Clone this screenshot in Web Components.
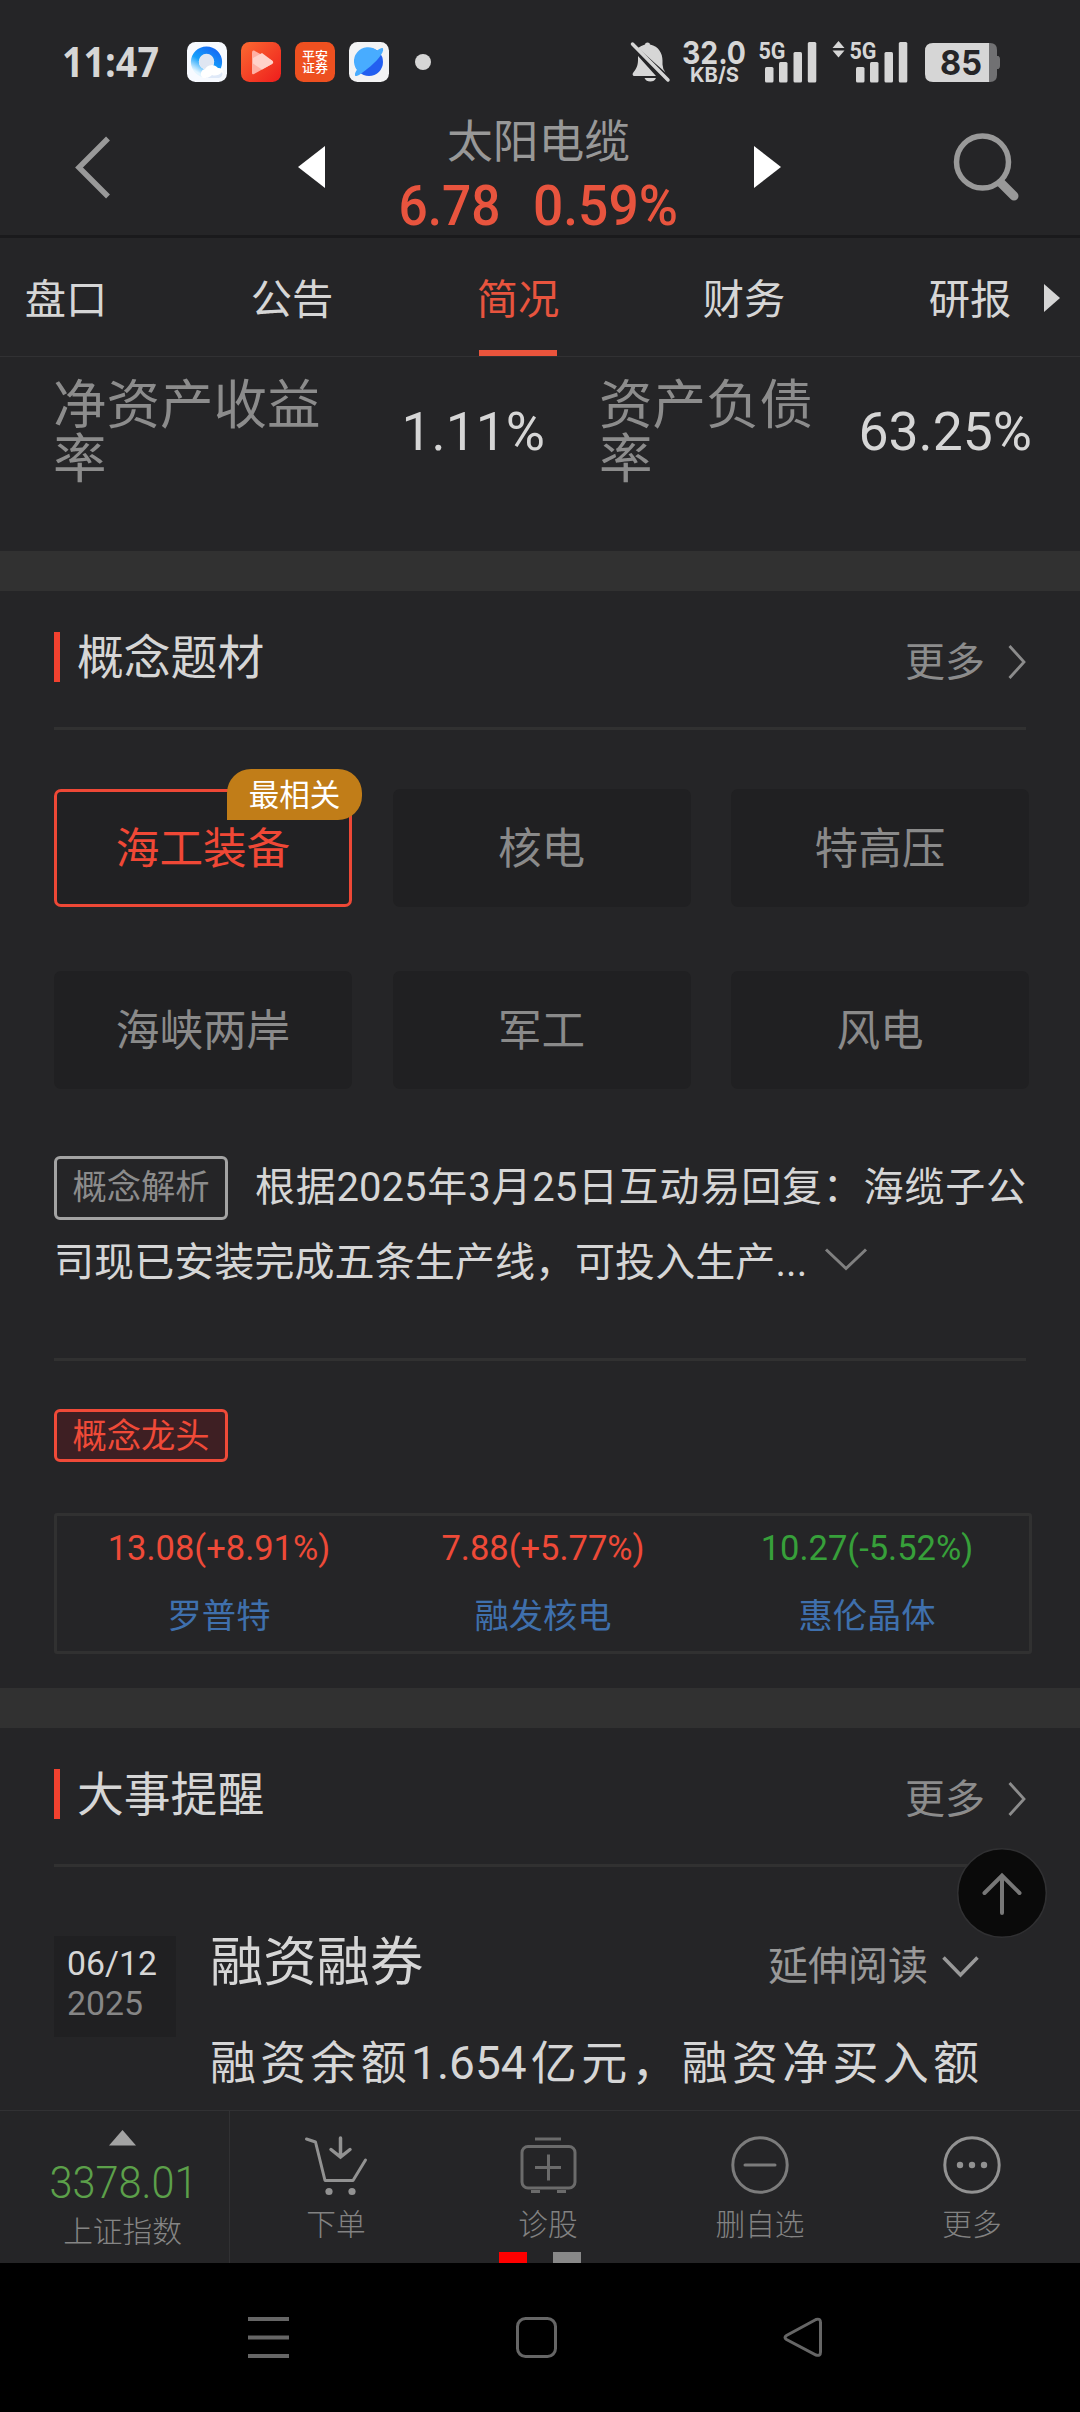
<!DOCTYPE html>
<html lang="zh-CN">
<head>
<meta charset="utf-8">
<title>太阳电缆</title>
<style>
html,body{margin:0;padding:0;background:#252527}
body{width:1080px;height:2412px;overflow:hidden;font-family:Roboto,"Noto Sans CJK SC",sans-serif;color:#d6d6d6}
</style>
</head>
<body>
<stock-app></stock-app>
<script>
const define = (name, css, html) => customElements.define(name, class extends HTMLElement {
  constructor() {
    super();
    const root = this.attachShadow({mode: 'open'});
    const body = typeof html === 'function' ? html(this) : html;
    root.innerHTML = `<style>*{box-sizing:border-box}svg{display:block;flex:none;overflow:visible}${css}</style>${body}`;
  }
});

define('status-bar', `
:host{display:flex;height:110px;padding:35px 80px 0 64px;align-items:flex-start;justify-content:space-between}
.l,.r{display:flex;height:54px;align-items:center}
.app{margin-left:14px}
`, `
<div class="l">
<svg width="96" height="54" fill="#d6d6d6"><text x="-2" y="42" font-family="Open Sans" font-weight="700" font-size="42" textLength="97" lengthAdjust="spacingAndGlyphs">11:47</text></svg>
<svg style="margin-left:27px" width="40" height="40" viewBox="0 0 40 40"><defs><linearGradient id="a" x1=".8" y1="0" x2=".2" y2="1"><stop offset="0" stop-color="#1670f5"/><stop offset=".55" stop-color="#14a0fb"/><stop offset="1" stop-color="#e3f5ff"/></linearGradient></defs><rect width="40" height="40" rx="8.5" fill="#f7faff"/><circle cx="19.500" cy="20" r="11.600" fill="none" stroke="url(#a)" stroke-width="8"/><circle cx="19.500" cy="19.500" r="7.700" fill="#dfe6f2"/><path d="M16 36a5 5 0 0 1 2-9 8 8 0 0 1 13-1 5 5 0 0 1 1 10z" fill="#fff"/><path d="M17 36h15a4 4 0 0 0 3-6c-3 4-8 4-10 3-3 3-6 3-8 3z" fill="#dfe9f8"/></svg>
<svg class="app" width="40" height="40" viewBox="0 0 40 40"><defs><linearGradient id="b" x1="0" y1="0" x2="1" y2="1"><stop offset="0" stop-color="#fb6a31"/><stop offset="1" stop-color="#ee1c1c"/></linearGradient></defs><rect width="40" height="40" rx="8.500" fill="url(#b)"/><path d="M13 8.500 Q11 8 11 10.500V31q0 2 2 1L31 22q2-2 0-3.500z" fill="#ffb0a4"/><path d="M12 16l9-5 10 7.500q2 1.500 0 3.500l-10 5.500-9-6z" fill="#ffd2ca"/></svg>
<svg class="app" width="40" height="40" viewBox="0 0 40 40"><rect width="40" height="40" rx="8.500" fill="#ee5020"/><g fill="#fff" font-family="Noto Sans CJK SC" font-weight="500" font-size="12.500"><text x="7" y="19" textLength="26" lengthAdjust="spacingAndGlyphs">平安</text><text x="7" y="31" textLength="26" lengthAdjust="spacingAndGlyphs">证券</text></g></svg>
<svg class="app" width="40" height="40" viewBox="0 0 40 40"><rect width="40" height="40" rx="8.500" fill="#f3f3f4"/><circle cx="20" cy="20" r="14" fill="#235ff0"/><path d="M10 30A14 14 0 0 1 28 8.500c3-2 5-3 6-2 1.500 4-7 14-16 20.500C12 32 7 35.500 6 33.500c-.5-2 1-5 2.500-6z" fill="#48acff"/></svg>
<svg style="margin-left:26px" width="16" height="16"><circle cx="8" cy="8" r="8" fill="#d6d6d6"/></svg>
</div>
<div class="r">
<svg width="370" height="54" viewBox="630 35 370 54" fill="#d6d6d6">
<path d="M638 48q3-2.500 7-3.500 0-2 2.500-2t2.500 2c9 2 12.500 9 12.500 16v4q0 4 3 8zM638 56v4c0 6-2 9-5 13-1 1.500 0 3 1 3h22zM644.500 78h11.500q-1.500 3.500-5.700 3.500t-5.800-3.500z"/>
<path d="M632.500 44l35.500 36" stroke="#d6d6d6" stroke-width="3.500" stroke-linecap="round"/>
<g font-family="Inter" font-weight="700">
<text x="682" y="63.500" font-size="31" textLength="64" lengthAdjust="spacingAndGlyphs">32.0</text>
<text x="690" y="81.500" font-size="20.500" textLength="49" lengthAdjust="spacingAndGlyphs">KB/S</text>
</g>
<g font-family="Roboto" font-weight="700" font-size="24.500"><text x="758.500" y="59" textLength="27" lengthAdjust="spacingAndGlyphs">5G</text><text x="849.500" y="59" textLength="27" lengthAdjust="spacingAndGlyphs">5G</text></g>
<g id="bars"><rect x="765" y="67" width="8.500" height="15.500" rx="1.500"/><rect x="779" y="62" width="8.500" height="20.500" rx="1.500"/><rect x="793.500" y="52" width="8.500" height="30.500" rx="1.500"/><rect x="807.800" y="42" width="8.500" height="40.500" rx="1.500"/></g>
<use href="#bars" x="91"/>
<path d="M838.500 41l6 7h-12zM832.500 50.500h12l-6 7z"/>
<path d="M989 43h1q7 0 7 7v6h1.500q1.500 1 1.500 3v7q0 2-1.500 3H997v6q0 7-7 7h-1z" fill="#717173"/>
<path d="M933 43h56v39h-56q-8 0-8-8V51q0-8 8-8z"/>
<text x="940" y="74.500" font-family="Inter" font-weight="700" font-size="34" fill="#252527" textLength="42" lengthAdjust="spacingAndGlyphs">85</text>
</svg>
</div>`);

define('title-bar', `
:host{display:flex;height:128px;padding:0 62px 0 76px;border-bottom:3px solid #1a1a1c;align-items:flex-start}
.name{font-size:45.800px;line-height:60px;color:#989898;text-align:center;width:279px;padding-top:1px;margin-right:3px}
.mid{margin:2px 0 0 74px;width:282px;display:flex;flex-direction:column;align-items:center}
`, `
<svg style="margin-top:26px" width="34" height="62" viewBox="0 0 34 62"><path d="M32 2.500L3 31.500 32 60.500" fill="none" stroke="#999" stroke-width="5.500"/></svg>
<svg style="margin:36px 0 0 188px" width="27" height="42"><path d="M27 0v42L0 21z" fill="#fff"/></svg>
<div class="mid"><div class="name">太阳电缆</div>
<svg width="282" height="56" viewBox="398 173 282 56" fill="#e8543e" font-family="Roboto" font-weight="500" font-size="56"><text x="397.500" y="224.500" textLength="102" lengthAdjust="spacingAndGlyphs">6.78</text><text x="532" y="224.500" textLength="145" lengthAdjust="spacingAndGlyphs">0.59%</text></svg></div>
<svg style="margin:36px 0 0 73px" width="27" height="42"><path d="M0 0v42l27-21z" fill="#fff"/></svg>
<svg style="margin:24px 0 0 173px" width="66" height="66" viewBox="953 134 66 66" fill="none" stroke="#999"><circle cx="981.500" cy="162" r="26" stroke-width="5.500"/><path d="M1000 183l13 13" stroke-width="9" stroke-linecap="round"/></svg>
`);

define('tab-item', `
:host{display:flex;flex-direction:column;width:82px;height:118px;align-items:center;font-size:41.300px;line-height:60px;padding-top:32px;white-space:nowrap}
i{width:78px;height:6px;margin-top:20px}
:host([active]){color:#e8543e}
:host([active]) i{background:#ea543c}
`, `<span><slot></slot></span><i></i>`);

define('tab-strip', `
:host{display:flex;height:119px;border-bottom:1px solid #313133;padding-left:25px;gap:144px}
svg{margin:46px 0 0 -111px}
`, `<tab-item>盘口</tab-item><tab-item>公告</tab-item><tab-item active>简况</tab-item><tab-item>财务</tab-item><tab-item>研报</tab-item><svg width="16" height="28"><path d="M0 0l16 14L0 28z" fill="#d6d6d6"/></svg>`);

define('key-stat', `
:host{display:flex;align-items:center;justify-content:space-between;height:108px;font-size:53.500px;line-height:54px}
.k{color:#8c8c8c;margin-left:-1px}
.v{margin-bottom:2px}
`, el => `<div class="k" style="width:${el.getAttribute('w')}px">${el.getAttribute('label')}</div><div class="v"><slot></slot></div>`);

define('section-head', `
:host{display:flex;height:139px;margin:0 54px;border-bottom:3px solid #313131;padding-top:41px;align-items:flex-start}
.row{display:flex;flex:1;height:50px;align-items:center}
i{width:6px;height:50px;background:#f2412f;margin-right:17px}
b{font-weight:400;font-size:46.800px;line-height:50px;flex:1;margin-top:1px}
span{font-size:40px;line-height:50px;color:#8c8c8c;margin:12px 23px 0 0}
svg{margin-top:10px}
`, `<div class="row"><i></i><b><slot></slot></b><span>更多</span><svg width="18" height="34"><path d="M1.500 1L16 17 1.500 33" fill="none" stroke="#8c8c8c" stroke-width="2.800"/></svg></div>`);

define('topic-chip', `
:host{display:flex;position:relative;height:118px;border-radius:7px;background:#202022;align-items:center;justify-content:center;font-size:43.600px;line-height:60px;color:#8a8a8a}
span{margin-top:3px}
:host([active]){color:#f04836;border:3px solid #ee4836;background:#212123}
.badge{position:absolute;right:-13px;top:-23px;width:135px;height:51px;border-radius:24px 24px 24px 0;background:#c17d18;color:#fff;font-size:30.500px;line-height:54px;text-align:center}
`, el => `<span><slot></slot></span>${el.hasAttribute('badge') ? `<div class="badge">${el.getAttribute('badge')}</div>` : ''}`);

define('label-tag', `
:host{display:flex;flex:none;width:174px;height:64px;border:3px solid #a3a3a3;border-radius:6px;color:#8c8c8c;align-items:center;justify-content:center;font-size:34.300px;line-height:50px;padding-bottom:2px}
:host([hot]){height:53px;border-color:#f04a38;background:#3e1f23;color:#f04a38;padding:0}
`, `<span><slot></slot></span>`);

define('leader-stock', `
:host{display:flex;flex:1;flex-direction:column;align-items:center;font-size:34.500px;line-height:64px;color:#ee4a38}
:host([down]){color:#37a03a}
div{color:#3f70ad;font-size:34.300px;line-height:73px}
`, el => `<span><slot></slot></span><div>${el.getAttribute('name')}</div>`);

define('event-row', `
:host{display:flex;margin:69px 0 0 54px}
.date{width:122px;height:101px;background:#202022;padding:8px 0 0 13px;font-size:33.800px;line-height:40px}
.date p{margin:0;color:#868686}
.body{width:769px;margin-left:34px}
.top{display:flex;height:54px;align-items:center;font-size:53.300px;line-height:54px}
.top b{font-weight:400;flex:1}
.top span{font-size:40px;color:#999;margin:8px 14px 0 0}
.top svg{margin-top:7px}
.txt{margin-top:43px;font-size:46px;line-height:60px;text-align:justify;text-align-last:justify;white-space:nowrap}
`, `<div class="date">06/12<p>2025</p></div><div class="body"><div class="top"><b>融资融券</b><span>延伸阅读</span><svg width="37" height="22"><path d="M1.500 1.500l17 17.500 17-17.500" fill="none" stroke="#999" stroke-width="3.500"/></svg></div><div class="txt"><slot></slot></div></div>`);

define('to-top', `
:host{display:block;position:absolute;left:957px;top:1848px}
`, `<svg width="90" height="90" viewBox="957 1848 90 90"><circle cx="1002" cy="1893" r="44.300" fill="#0a0a0a" stroke="#303032" stroke-width="1.500"/><path d="M1002 1913v-37M984.500 1893l17.500-17.500 17.500 17.500" fill="none" stroke="#777" stroke-width="4" stroke-linecap="round"/></svg>`);

define('action-item', `
:host{display:flex;flex:1;flex-direction:column;align-items:center;padding-top:24px;font-size:29.700px;line-height:40px;font-weight:300;color:#828282}
span{margin-top:10px}
`, el => `<svg width="62" height="60" viewBox="0 0 62 60" fill="none" stroke="${el.getAttribute('tone')}" stroke-width="3">${({
cart:'<path d="M1.500 4l9 3 9.500 38.500h28L60.500 25" stroke-linecap="round" stroke-linejoin="round"/><path d="M35.500 3v18M26 14.500l9.500 7.500 9.500-7.500" stroke-width="3.500" stroke-linecap="round"/><g stroke="none" fill="#929292"><circle cx="24" cy="56.500" r="3.600"/><circle cx="47" cy="56.500" r="3.600"/></g>',
kit:'<path d="M18 4h26M14 56.500h9M40 56.500h9"/><rect x="5" y="11.500" width="53" height="41.500" rx="6"/><path d="M18 32.500h26M31.500 19.500v26"/>',
minus:'<circle cx="31" cy="30" r="27.200"/><path d="M16 30h30" stroke-linecap="round"/>',
more:'<circle cx="31" cy="30" r="27.200"/><g stroke="none" fill="#929292"><circle cx="19" cy="30" r="3.200"/><circle cx="31" cy="30" r="3.200"/><circle cx="43" cy="30" r="3.200"/></g>'
})[el.getAttribute('icon')]}</svg><span><slot></slot></span>`);

define('action-bar', `
:host{display:flex;position:relative;height:153px;border-top:1px solid #313133;padding-right:2px}
.idx{width:230px;border-right:1px solid #313133;display:flex;flex-direction:column;align-items:center;padding:19px 0 0 16px;font-size:29.700px;line-height:40px;font-weight:300;color:#858585}
.pg{position:absolute;top:141px;width:28px;height:11px}
`, `<div class="idx"><svg width="27" height="16"><path d="M13.500 0L27 15.500H0z" fill="#a3a3a3"/></svg>
<svg width="144" height="66" viewBox="51 2146 144 66"><text x="49.500" y="2197.500" font-family="Roboto" font-size="44" fill="#5ca04a" textLength="148" lengthAdjust="spacingAndGlyphs">3378.01</text></svg><span>上证指数</span></div>
<action-item icon="cart" tone="#929292">下单</action-item><action-item icon="kit" tone="#6b6b6b">诊股</action-item><action-item icon="minus" tone="#7c7c7c">删自选</action-item><action-item icon="more" tone="#929292">更多</action-item>
<div class="pg" style="left:499px;background:#f00"></div><div class="pg" style="left:553px;background:#888"></div>`);

define('system-nav', `
:host{display:flex;height:149px;background:#000;padding:54px 258px 0 248px;justify-content:space-between}
`, `<svg width="41" height="41" stroke="#666" stroke-width="4"><path d="M0 2h41M0 20.500h41M0 39h41"/></svg>
<svg width="41" height="41"><rect x="1.500" y="1.500" width="38" height="38" rx="8" fill="none" stroke="#666" stroke-width="3"/></svg>
<svg width="39" height="41"><path d="M33 2.500L3.500 18.500q-3 2 0 4L33 38q4.500 1.500 4.500-3V5.500q0-4.500-4.500-3z" fill="none" stroke="#666" stroke-width="3"/></svg>`);

define('stock-app', `
:host{display:flex;flex-direction:column;position:relative;width:1080px;height:2412px;background:#252527;overflow:hidden}
main{height:1753px;overflow:hidden;flex:none}
.stats{display:flex;height:194px;padding:22px 48px 0 54px;gap:55px}
.band{height:40px;background:#313131}
.chips{display:grid;grid-template-columns:repeat(3,1fr);column-gap:40.500px;row-gap:64px;margin:59px 51px 0 54px}
.an{display:flex;flex-direction:column;margin:63px 54px 0;font-size:40px;line-height:74px;white-space:nowrap}
.l1{display:flex;gap:27px;height:74px}
.l1 label-tag{margin-top:4px}
.l1 p{margin:-1px 0 0;flex:1;text-align:justify;text-align-last:justify}
.l2{display:flex;align-items:center;gap:18px;height:74px}
.l2 span{letter-spacing:.08px;margin-top:-1px}
.l2 svg{margin-top:-8px}
.hr{height:3px;background:#313131;margin:58px 54px 48px}
.hot{margin-left:54px}
.tbl{display:flex;margin:51px 48px 34px 54px;height:141px;border:3px solid #313131;border-radius:3px}
`, `
<status-bar></status-bar>
<title-bar></title-bar>
<tab-strip></tab-strip>
<main>
<div class="stats"><key-stat style="width:491px" label="净资产收益率" w="272">1.11%</key-stat><key-stat style="width:432px" label="资产负债率" w="218">63.25%</key-stat></div>
<div class="band"></div>
<section-head>概念题材</section-head>
<div class="chips"><topic-chip active badge="最相关">海工装备</topic-chip><topic-chip>核电</topic-chip><topic-chip>特高压</topic-chip><topic-chip>海峡两岸</topic-chip><topic-chip>军工</topic-chip><topic-chip>风电</topic-chip></div>
<div class="an"><div class="l1"><label-tag>概念解析</label-tag><p>根据2025年3月25日互动易回复：海缆子公</p></div>
<div class="l2"><span>司现已安装完成五条生产线，可投入生产...</span><svg width="42" height="23"><path d="M1 1.500L21 20.500 41 1.500" fill="none" stroke="#808080" stroke-width="3"/></svg></div></div>
<div class="hr"></div>
<label-tag class="hot" hot>概念龙头</label-tag>
<div class="tbl"><leader-stock name="罗普特">13.08(+8.91%)</leader-stock><leader-stock name="融发核电">7.88(+5.77%)</leader-stock><leader-stock down name="惠伦晶体">10.27(-5.52%)</leader-stock></div>
<div class="band"></div>
<section-head>大事提醒</section-head>
<event-row>融资余额1.654亿元，融资净买入额</event-row>
</main>
<action-bar></action-bar>
<system-nav></system-nav>
<to-top></to-top>
`);
</script>
</body>
</html>
